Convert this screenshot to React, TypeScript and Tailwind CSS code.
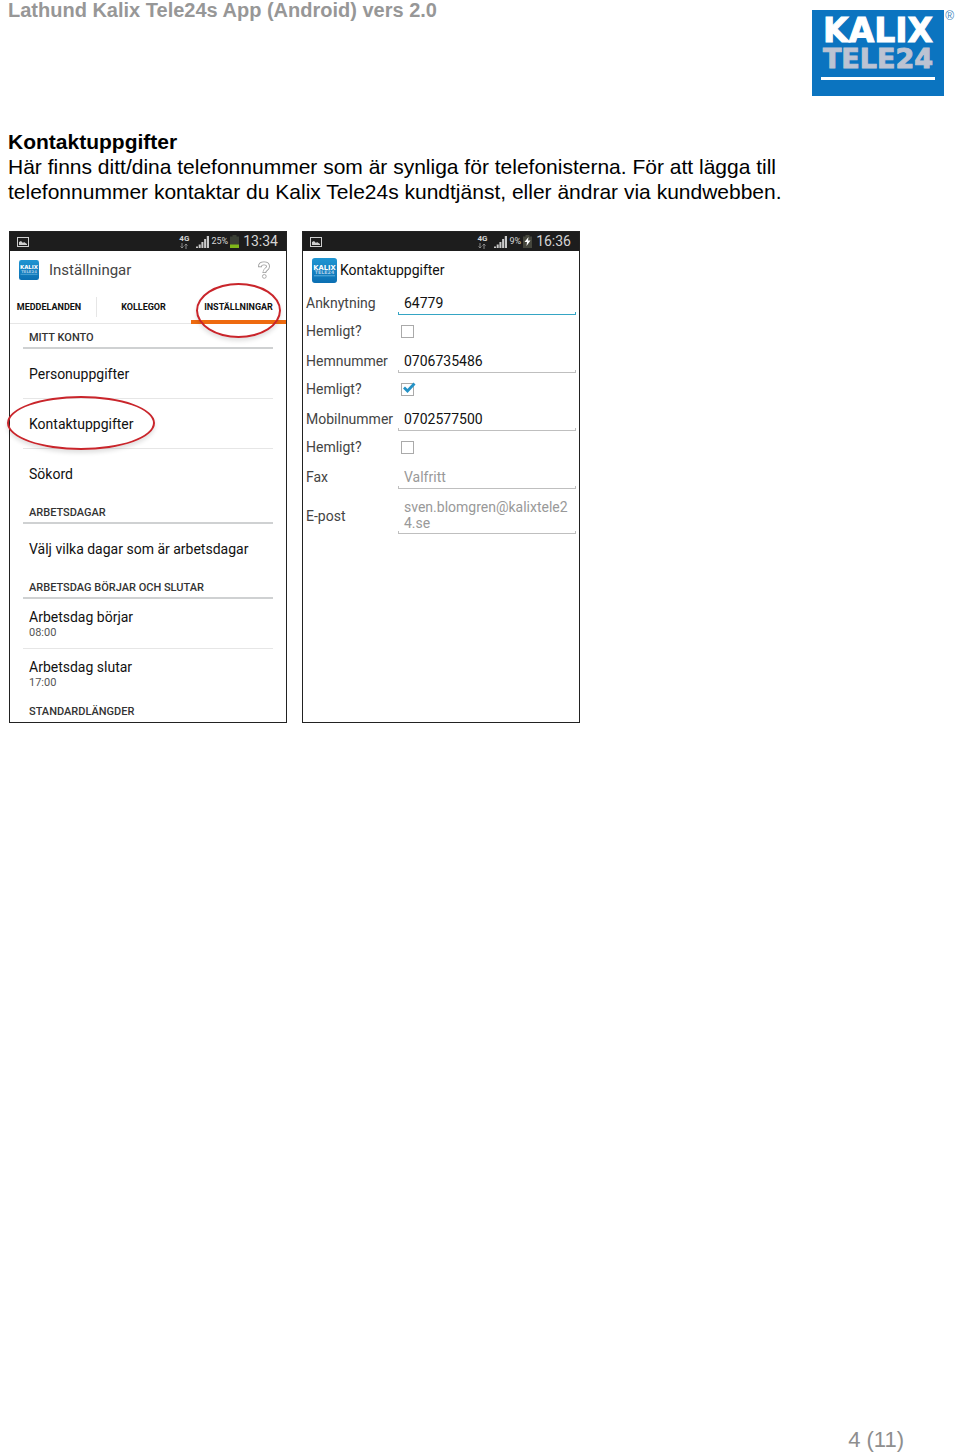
import { useState, type ReactNode } from 'react';

const tabs = [
  { name: 'MEDDELANDEN', className: 'w-[86px] pr-2' },
  { name: 'KOLLEGOR', className: 'flex-1' },
  { name: 'INSTÄLLNINGAR', className: 'w-[95px]' },
];

function Logo() {
  return (
    <div className="flex shrink-0 items-start gap-px">
      <svg width="132" height="86" viewBox="0 0 132 86" role="img" aria-label="Kalix Tele24">
        <rect width="132" height="86" fill="#0b74c0" />
        <g fontFamily="'DejaVu Sans', sans-serif" fontWeight="700" textAnchor="middle" strokeWidth="1">
          <text x="66" y="32" fontSize="33" fill="#fff" stroke="#fff">KALIX</text>
          <text x="66" y="58" fontSize="27" fill="#bcc3d2" stroke="#bcc3d2">TELE24</text>
        </g>
        <rect x="9" y="67" width="114" height="3" fill="#fff" />
      </svg>
      <span className="text-[12px] leading-3 text-[#3f86bd]">®</span>
    </div>
  );
}

function AppIcon({ className }: { className: string }) {
  return (
    <svg className={className} viewBox="0 0 26 26" aria-hidden="true">
      <defs>
        <linearGradient id="app-icon" x1="0" y1="0" x2="0" y2="1">
          <stop offset="0" stopColor="#1f95d2" />
          <stop offset="1" stopColor="#0b6fb2" />
        </linearGradient>
      </defs>
      <rect width="26" height="26" rx="3" fill="url(#app-icon)" />
      <g fontFamily="'DejaVu Sans', sans-serif" fontWeight="700" textAnchor="middle">
        <text x="13" y="12" fontSize="7" fill="#fff">KALIX</text>
        <text x="13" y="17" fontSize="5" fill="#a9cbe6">TELE24</text>
      </g>
      <rect x="2" y="18" width="22" height="1" fill="#5fb0dd" />
    </svg>
  );
}

function StatusBar({ time, battery, charging }: { time: string; battery: string; charging?: boolean }) {
  return (
    <div className="flex h-[19px] items-center bg-[#1d1d1d] pr-2 pl-[7px] text-[#d5d5d5]">
      <svg className="mr-auto" width="12" height="10" viewBox="0 0 12 10" aria-hidden="true">
        <rect x=".5" y=".5" width="11" height="9" fill="none" stroke="#cfcfcf" />
        <path d="M2 8V5l2-1 2 2 1-1 3 2v1z" fill="#cfcfcf" />
      </svg>
      <div className="mr-[7px] flex flex-col items-center">
        <span className="text-[8px] leading-2 font-bold">4G</span>
        <svg width="8" height="6" viewBox="0 0 8 6" fill="none" stroke="#8b8b8b" aria-hidden="true">
          <path d="M2 0v5M.5 3.5 2 5l1.500-1.500M6 6V1M4.500 2.500 6 1l1.500 1.500" />
        </svg>
      </div>
      <svg className="mr-0.5" width="13" height="12" viewBox="0 0 13 12" fill="#c9c9c9" aria-hidden="true">
        <path d="M0 12V10.500h2V12zM2.700 12V8.500h2V12zM5.400 12V6h2v6zM8.100 12V3h2v9zM10.800 12V0H13v12z" />
      </svg>
      <span className="text-[9px]">{battery}</span>
      <svg className="mr-1 ml-0.5" width="9" height="13" viewBox="0 0 9 13" aria-hidden="true">
        <path d="M0 1.500h2.500V0h4v1.500H9V13H0z" fill={charging ? '#45463c' : '#3a3f35'} />
        {charging ? (
          <path d="M5.500 2 1.500 7h2.500L3.500 11l4-5.500H5z" fill="#fff" />
        ) : (
          <path d="M0 9.500h9V13H0z" fill="#7fb81a" />
        )}
      </svg>
      <span className="text-[14px]">{time}</span>
    </div>
  );
}

function Phone({ children }: { children: ReactNode }) {
  return (
    <section className="flex w-[278px] flex-col border border-[#222] bg-white font-[Roboto,sans-serif]">
      {children}
    </section>
  );
}

function SectionTitle({ children, last }: { children: ReactNode; last?: boolean }) {
  return (
    <h3
      className={`flex items-center px-1.5 text-[11px] font-medium text-[#333] ${
        last ? 'h-[23px] pt-0.5' : 'h-[25px] border-b-2 border-[#cfd1d2] pt-1'
      }`}
    >
      {children}
    </h3>
  );
}

function Item({ title, value, divider, marked }: { title: string; value?: string; divider?: boolean; marked?: boolean }) {
  return (
    <button
      type="button"
      className={`relative flex h-[50px] w-full flex-col justify-center px-1.5 text-left ${
        divider ? 'border-b border-[#e6e6e6]' : ''
      }`}
    >
      <span className="text-[14px] leading-[18px] text-[#111]">{title}</span>
      {value && <span className="text-[11px] leading-[14px] text-[#555]">{value}</span>}
      {marked && <Ring className="-top-[3px] -left-4 h-[54px] w-[148px]" />}
    </button>
  );
}

// Red marker drawn over the thing the reader should press
function Ring({ className }: { className: string }) {
  return (
    <span
      className={`pointer-events-none absolute rounded-[50%] border-2 border-[#c9252b] shadow-[0_3px_4px_rgba(0,0,0,0.12)] ${className}`}
    />
  );
}

function SettingsPhone() {
  const [active, setActive] = useState('INSTÄLLNINGAR');

  return (
    <Phone>
      <StatusBar time="13:34" battery="25%" />
      <header className="flex h-[38px] items-center pr-4 pl-[9px]">
        <AppIcon className="size-5" />
        <h2 className="ml-2.5 text-[15px] text-[#444]">Inställningar</h2>
        <button type="button" aria-label="Hjälp" className="ml-auto">
          <svg width="12" height="18" viewBox="0 0 12 18" fill="none" aria-hidden="true">
            <path d="M2 6.200V5.500C2 3.300 3.600 2.300 6 2.300s4 1.200 4 3.200C10 8.500 6.300 8 6.300 12" stroke="#999" strokeWidth="3.800" />
            <path d="M2 5.400C2.100 3.300 3.600 2.300 6 2.300s4 1.200 4 3.200C10 8.500 6.300 8 6.300 11.200" stroke="#fff" strokeWidth="2.200" />
            <circle cx="6.300" cy="15.400" r="1.900" fill="#fff" stroke="#999" strokeWidth=".8" />
          </svg>
        </button>
      </header>
      <nav className="relative flex h-[35px] border-b border-[#e6e6e6]">
        {tabs.map((tab) => (
          <button
            key={tab.name}
            type="button"
            onClick={() => setActive(tab.name)}
            className={`relative pt-0.5 text-[9px] font-bold text-[#111] ${tab.className}`}
          >
            {tab.name}
            {active === tab.name && <span className="absolute inset-x-0 -bottom-px h-1 bg-[#ee6a10]" />}
          </button>
        ))}
        <span className="absolute top-2 left-[86px] h-5 w-px bg-[#e6e6e6]" />
        <Ring className="-top-1.5 right-[5px] h-[55px] w-[85px]" />
      </nav>
      <div className="px-[13px]">
        <SectionTitle>MITT KONTO</SectionTitle>
        <Item title="Personuppgifter" divider />
        <Item title="Kontaktuppgifter" divider marked />
        <Item title="Sökord" />
        <SectionTitle>ARBETSDAGAR</SectionTitle>
        <Item title="Välj vilka dagar som är arbetsdagar" />
        <SectionTitle>ARBETSDAG BÖRJAR OCH SLUTAR</SectionTitle>
        <Item title="Arbetsdag börjar" value="08:00" divider />
        <Item title="Arbetsdag slutar" value="17:00" />
        <SectionTitle last>STANDARDLÄNGDER</SectionTitle>
      </div>
    </Phone>
  );
}

function Underline({ focused }: { focused?: boolean }) {
  return <span className={`block h-[3px] border border-t-0 ${focused ? 'border-[#35a5c4]' : 'border-[#bfbfbf]'}`} />;
}

function Field({ id, label, value, placeholder, focused }: {
  id: string;
  label: string;
  value?: string;
  placeholder?: string;
  focused?: boolean;
}) {
  return (
    <div className="flex h-[29px] items-center">
      <label htmlFor={id} className="w-[92px] shrink-0 text-[#444]">{label}</label>
      <div className="min-w-0 flex-1">
        <input
          id={id}
          type="text"
          defaultValue={value}
          placeholder={placeholder}
          className="block h-5 w-full px-1.5 pt-0.5 text-[#111] outline-none placeholder:text-[#999]"
        />
        <Underline focused={focused} />
      </div>
    </div>
  );
}

function SecretBox({ id, checked = false }: { id: string; checked?: boolean }) {
  const [on, setOn] = useState(checked);

  return (
    <div className="flex h-[29px] items-center pb-0.5">
      <label htmlFor={id} className="w-[95px] shrink-0 text-[#444]">Hemligt?</label>
      <span className="relative flex">
        <input
          id={id}
          type="checkbox"
          checked={on}
          onChange={() => setOn(!on)}
          className="size-[13px] appearance-none border border-[#aaa] bg-white"
        />
        {on && (
          <svg className="pointer-events-none absolute -top-px left-px" width="14" height="12" viewBox="0 0 14 12" aria-hidden="true">
            <path d="M2 5.500l3.500 3.500L12.500 1.500" fill="none" stroke="#2492c6" strokeWidth="2.800" />
          </svg>
        )}
      </span>
    </div>
  );
}

function ContactPhone() {
  return (
    <Phone>
      <StatusBar time="16:36" battery="9%" charging />
      <header className="flex h-[38px] items-center pl-[9px]">
        <AppIcon className="size-[25px]" />
        <h2 className="ml-[3px] text-[14px] text-[#111]">Kontaktuppgifter</h2>
      </header>
      <form className="px-[3px] text-[14px]">
        <Field id="ext" label="Anknytning" value="64779" focused />
        <SecretBox id="ext-secret" />
        <Field id="home" label="Hemnummer" value="0706735486" />
        <SecretBox id="home-secret" checked />
        <Field id="mobile" label="Mobilnummer" value="0702577500" />
        <SecretBox id="mobile-secret" />
        <Field id="fax" label="Fax" placeholder="Valfritt" />
        <div className="flex h-12 items-center">
          <label htmlFor="email" className="w-[92px] shrink-0 text-[#444]">E-post</label>
          <div className="min-w-0 flex-1">
            <textarea
              id="email"
              rows={2}
              defaultValue="sven.blomgren@kalixtele24.se"
              className="block w-full resize-none overflow-hidden px-1.5 leading-4 break-all text-[#999] outline-none"
            />
            <Underline />
          </div>
        </div>
      </form>
    </Phone>
  );
}

export default function App() {
  return (
    <div className="flex min-h-screen flex-col bg-white px-2 font-['Liberation_Sans',Arial,sans-serif] text-[21px] leading-[25px] text-black">
      <header className="-mr-0.5 flex justify-between">
        <p className="text-[20px] leading-5 font-bold text-[#979797]">Lathund Kalix Tele24s App (Android) vers 2.0</p>
        <div className="pt-2.5">
          <Logo />
        </div>
      </header>
      <main className="pt-[33px]">
        <h1 className="font-bold">Kontaktuppgifter</h1>
        <p className="max-w-[800px]">
          Här finns ditt/dina telefonnummer som är synliga för telefonisterna. För att lägga till telefonnummer
          kontaktar du Kalix Tele24s kundtjänst, eller ändrar via kundwebben.
        </p>
        <div className="mt-[27px] ml-px flex flex-wrap gap-[15px]">
          <SettingsPhone />
          <ContactPhone />
        </div>
      </main>
      <footer className="mt-auto pr-12 text-right text-[22px] text-[#8e8e8e]">4 (11)</footer>
    </div>
  );
}
